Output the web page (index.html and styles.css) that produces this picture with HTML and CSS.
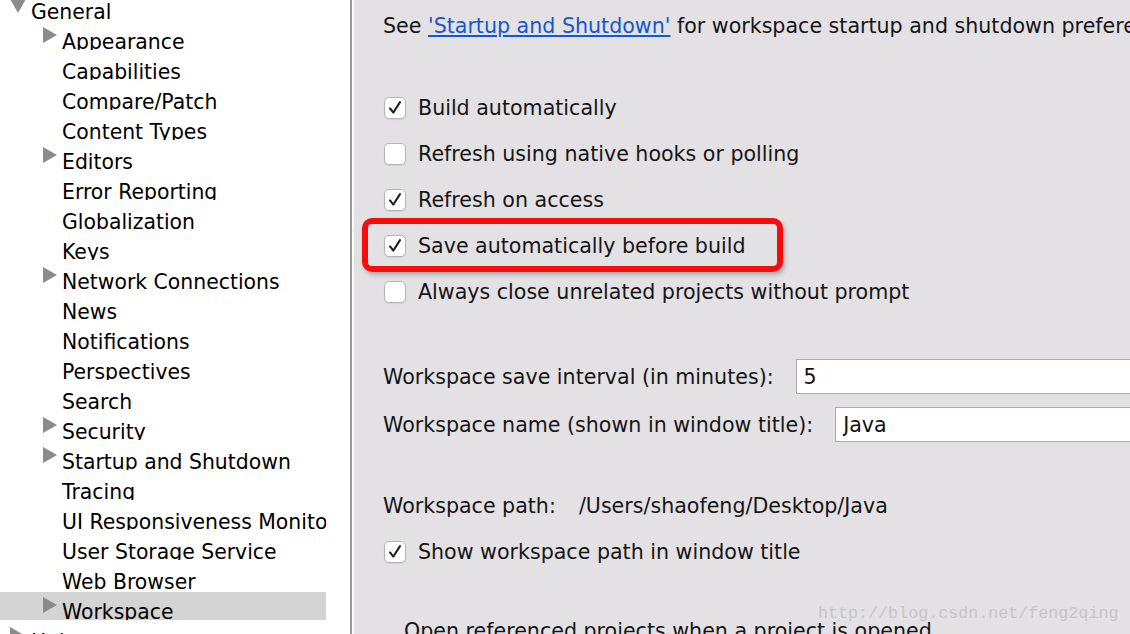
FILE: index.html
```html
<!DOCTYPE html>
<html lang="en">

<head>
  <meta charset="UTF-8">
  <meta name="viewport" content="width=device-width, initial-scale=1.0">
  <title>Preferences - Workspace</title>
  <link rel="stylesheet" href="styles.css">
</head>

<body>
  <div id="sidebar">
    <ul class="tree">
      <li class="row lvl1"><span class="twisty"><i class="tri down"></i></span><span class="label">General</span></li>
      <li class="row lvl2"><span class="twisty"><i class="tri"></i></span><span class="label">Appearance</span></li>
      <li class="row lvl2"><span class="twisty"></span><span class="label">Capabilities</span></li>
      <li class="row lvl2"><span class="twisty"></span><span class="label">Compare/Patch</span></li>
      <li class="row lvl2"><span class="twisty"></span><span class="label">Content Types</span></li>
      <li class="row lvl2"><span class="twisty"><i class="tri"></i></span><span class="label">Editors</span></li>
      <li class="row lvl2"><span class="twisty"></span><span class="label">Error Reporting</span></li>
      <li class="row lvl2"><span class="twisty"></span><span class="label">Globalization</span></li>
      <li class="row lvl2"><span class="twisty"></span><span class="label">Keys</span></li>
      <li class="row lvl2"><span class="twisty"><i class="tri"></i></span><span class="label">Network Connections</span></li>
      <li class="row lvl2"><span class="twisty"></span><span class="label">News</span></li>
      <li class="row lvl2"><span class="twisty"></span><span class="label">Notifications</span></li>
      <li class="row lvl2"><span class="twisty"></span><span class="label">Perspectives</span></li>
      <li class="row lvl2"><span class="twisty"></span><span class="label">Search</span></li>
      <li class="row lvl2"><span class="twisty"><i class="tri"></i></span><span class="label">Security</span></li>
      <li class="row lvl2"><span class="twisty"><i class="tri"></i></span><span class="label">Startup and Shutdown</span></li>
      <li class="row lvl2"><span class="twisty"></span><span class="label">Tracing</span></li>
      <li class="row lvl2"><span class="twisty"></span><span class="label">UI Responsiveness Monitoring</span></li>
      <li class="row lvl2"><span class="twisty"></span><span class="label">User Storage Service</span></li>
      <li class="row lvl2"><span class="twisty"></span><span class="label">Web Browser</span></li>
      <li class="row lvl2 selected"><span class="twisty"><i class="tri"></i></span><span class="label">Workspace</span></li>
      <li class="row lvl1"><span class="twisty"><i class="tri"></i></span><span class="label">Help</span></li>
    </ul>
  </div>

  <div id="main">
    <p class="intro">See <a href="#">'Startup and Shutdown'</a> for workspace startup and shutdown preferences.</p>

    <div class="checks">
      <label class="check-row"><span class="box on"><svg viewBox="0 0 22 22"><path d="M5.5 11.5 L9.2 16 L16.5 4.5" /></svg></span>Build automatically</label>
      <label class="check-row"><span class="box"></span>Refresh using native hooks or polling</label>
      <label class="check-row"><span class="box on"><svg viewBox="0 0 22 22"><path d="M5.5 11.5 L9.2 16 L16.5 4.5" /></svg></span>Refresh on access</label>
      <label class="check-row marked"><span class="box on"><svg viewBox="0 0 22 22"><path d="M5.5 11.5 L9.2 16 L16.5 4.5" /></svg></span>Save automatically before build</label>
      <label class="check-row"><span class="box"></span>Always close unrelated projects without prompt</label>
    </div>

    <div class="fields">
      <div class="field">
        <span>Workspace save interval (in minutes):</span>
        <input type="text" value="5">
      </div>
      <div class="field">
        <span>Workspace name (shown in window title):</span>
        <input type="text" value="Java">
      </div>
    </div>

    <div class="path-row">
      <span>Workspace path:</span>
      <span>/Users/shaofeng/Desktop/Java</span>
    </div>
    <label class="check-row show-path"><span class="box on"><svg viewBox="0 0 22 22"><path d="M5.5 11.5 L9.2 16 L16.5 4.5" /></svg></span>Show workspace path in window title</label>

    <div class="group-title">Open referenced projects when a project is opened</div>

    <div class="watermark">http://blog.csdn.net/feng2qing</div>
  </div>
</body>

</html>
```

FILE: styles.css
```css
body {
  margin: 0;
  height: 634px;
  display: flex;
  overflow: hidden;
  font-family: "DejaVu Sans", "Noto Sans", sans-serif;
  font-size: 20.6px;
  color: #111;
  background: #fff;
}

/* left tree */
#sidebar {
  width: 350px;
  flex-shrink: 0;
  border-right: 2px solid #979797;
  margin-right: 2px;
  overflow: hidden;
}

.tree {
  list-style: none;
  margin: -8px 0 0 0;
  padding: 0;
  width: 326px;
  overflow: hidden;
  font-size: 20.4px;
}

.row {
  display: flex;
  align-items: flex-start;
  height: 28px;
  margin-bottom: 2px;
  overflow: hidden;
  white-space: nowrap;
  color: #000;
}

.row.lvl1 {
  padding-left: 10px;
}

.row.lvl1 .twisty {
  width: 21px;
}

.row.lvl2 {
  padding-left: 43px;
}

.row.lvl2 .twisty {
  width: 19px;
}

.twisty {
  flex-shrink: 0;
  height: 28px;
}

.tri {
  display: block;
  width: 0;
  height: 0;
  margin-top: 5px;
  border-left: 14px solid #8b8b8b;
  border-top: 8px solid transparent;
  border-bottom: 8px solid transparent;
}

.tri.down {
  margin-top: 7px;
  border-top: 14px solid #8b8b8b;
  border-left: 8px solid transparent;
  border-right: 8px solid transparent;
  border-bottom: 0;
}

.label {
  padding-top: 9px;
  line-height: 23px;
}

.row.selected {
  background: #d4d4d4;
}

/* right page */
#main {
  position: relative;
  flex: 1;
  background: #e3e1e4;
  padding-left: 29px;
  overflow: hidden;
  white-space: nowrap;
  color: #151515;
}

.intro {
  margin: 0;
  height: 52px;
  line-height: 53px;
}

.intro a {
  color: #1357d2;
  text-decoration: underline;
}

.checks {
  margin-top: 33px;
}

.check-row {
  display: flex;
  align-items: center;
  gap: 12px;
  height: 46px;
}

.box {
  width: 22px;
  height: 22px;
  margin-left: 1px;
  box-sizing: border-box;
  border: 1px solid #b5b5b5;
  border-radius: 5px;
  background: #fff;
  box-shadow: 0 1px 1px rgba(0, 0, 0, 0.08);
  flex-shrink: 0;
}

.box svg {
  display: block;
  width: 20px;
  height: 20px;
}

.box svg path {
  fill: none;
  stroke: #1e1e1e;
  stroke-width: 2.3;
  stroke-linecap: round;
  stroke-linejoin: round;
}

.marked {
  position: relative;
}

/* red highlight drawn over the row */
.marked::after {
  content: "";
  position: absolute;
  top: -5px;
  bottom: -3px;
  left: -21px;
  width: 421px;
  box-sizing: border-box;
  border: 6px solid #f50d0d;
  border-radius: 10px;
  box-shadow: 2px 3px 4px rgba(0, 0, 0, 0.25);
}

.fields {
  margin-top: 44px;
  display: flex;
  flex-direction: column;
  gap: 13px;
}

.field {
  display: flex;
  align-items: center;
  gap: 22px;
  height: 35px;
}

.field input {
  width: 520px;
  height: 35px;
  flex-shrink: 0;
  box-sizing: border-box;
  border: 1px solid #a9a9a9;
  border-radius: 0;
  background: #fff;
  padding: 0 7px;
  font-family: inherit;
  font-size: 20.6px;
  color: #111;
  outline: none;
}

.path-row {
  margin-top: 49px;
  height: 30px;
  display: flex;
  align-items: center;
  gap: 23px;
}

.show-path {
  margin-top: 8px;
}

.group-title {
  margin-top: 33px;
  padding-left: 21px;
  height: 46px;
  line-height: 46px;
}

.watermark {
  position: absolute;
  left: 464px;
  top: 603px;
  font-family: "Liberation Mono", monospace;
  font-size: 16.7px;
  line-height: 22px;
  color: #c6c6c6;
}
```
